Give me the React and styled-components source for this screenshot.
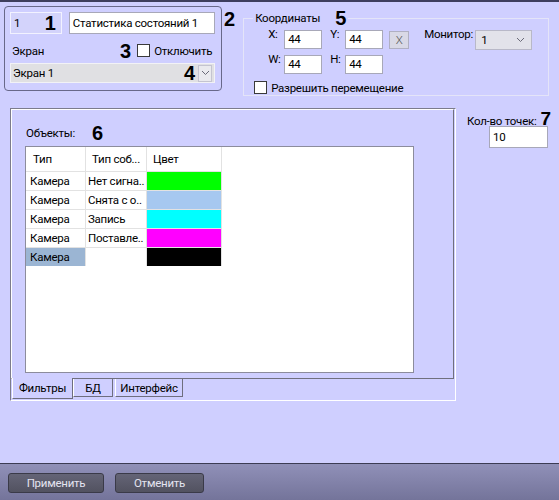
import React from 'react'
import styled, { createGlobalStyle } from 'styled-components'

const GlobalStyle = createGlobalStyle`
  html, body {
    margin: 0;
    padding: 0;
    background: #cfcfff;
  }
  body {
    font-family: Roboto, "Liberation Sans", sans-serif;
    font-size: 11.5px;
    letter-spacing: -0.25px;
    color: #000;
  }
  * { box-sizing: border-box; }
`

const Screen = styled.div`
  width: 559px;
  height: 500px;
  display: flex;
  flex-direction: column;
  border-top: 2px solid #3e3e5e;
  background: #cfcfff;
  overflow: hidden;
`

const Callout = styled.span`
  font-family: "Liberation Sans", Arial, sans-serif;
  font-weight: bold;
  font-size: ${p => p.size || 20}px;
  line-height: ${p => p.size || 20}px;
  letter-spacing: 0;
  color: #000;
  margin-left: ${p => p.ml || 0}px;
  margin-top: ${p => p.mt || 0}px;
`

const TopRow = styled.div`
  display: flex;
  align-items: flex-start;
  height: 106px;
  padding: 4px 0 0 4px;
`

const LeftPanel = styled.div`
  width: 218px;
  height: 85px;
  border: 1px solid #68688a;
  border-radius: 4px;
  padding: 5px 6px 0 5px;
  display: flex;
  flex-direction: column;
`

const PanelRow = styled.div`
  display: flex;
  align-items: center;
  height: ${p => p.h}px;
  margin-top: ${p => p.mt || 0}px;
  padding-left: ${p => p.pl || 0}px;
`

const IdField = styled.div`
  width: 52px;
  height: 22px;
  background: #d3d3fb;
  border: 1px solid #f2f2ff;
  display: flex;
  align-items: center;
  justify-content: space-between;
  padding: 0 5px 0 3px;
`

const TextBox = styled.div`
  width: ${p => p.w}px;
  height: ${p => p.h || 22}px;
  margin-left: ${p => p.ml || 0}px;
  margin-top: ${p => p.mt || 0}px;
  background: #fff;
  border: 1px solid #a8a8b8;
  padding: 0 3px ${p => (p.bottom ? 2 : 0)}px;
  display: flex;
  align-items: ${p => (p.bottom ? 'flex-end' : 'center')};
  white-space: nowrap;
`

const FieldLabel = styled.span`
  width: ${p => p.w}px;
  flex: none;
  white-space: nowrap;
`

const CheckBox = styled.span`
  width: 13px;
  height: 13px;
  flex: none;
  background: #fff;
  border: 1px solid #3a3a3a;
  margin-left: ${p => p.ml || 0}px;
`

const CheckText = styled.span`
  margin-left: 4px;
  white-space: nowrap;
`

const Combo = styled.div`
  width: ${p => p.w}px;
  height: 20px;
  background: #e0e0e3;
  border: 1px solid #f2f2f6;
  display: flex;
  align-items: center;
  padding: 0 2px 0 2px;
`

const ComboText = styled.span`
  flex: 1;
  white-space: nowrap;
`

const DropButton = styled.span`
  width: 14px;
  height: 17px;
  flex: none;
  background: #eaeaee;
  border: 1px solid #c4c4d0;
  display: flex;
  align-items: center;
  justify-content: center;
  margin-left: 3px;
`

const Select = styled.div`
  width: 57px;
  height: 20px;
  background: #e2e2ea;
  border: 1px solid #b8b8c8;
  display: flex;
  align-items: flex-end;
  justify-content: space-between;
  padding: 0 6px 2px 5px;
  margin-left: ${p => p.ml || 0}px;
  svg { margin-bottom: 4px; }
`

const Coords = styled.fieldset`
  width: 306px;
  margin: 2px 0 0 8px;
  padding: 0 0 1px 0;
  border: 1px solid #e4e4f8;
  min-width: 0;
`

const Legend = styled.legend`
  display: flex;
  align-items: center;
  height: 20px;
  margin-left: 9px;
  padding: 0 2px;
`

const CoordRow = styled.div`
  display: flex;
  align-items: flex-start;
  height: ${p => p.h || 19}px;
  margin-top: ${p => p.mt}px;
  padding-left: ${p => p.pl || 24}px;
`

const AxisLabel = styled.span`
  width: ${p => p.w}px;
  flex: none;
  margin-left: ${p => p.ml || 0}px;
  margin-top: -3px;
  line-height: 14px;
  white-space: nowrap;
`

const ClearButton = styled.span`
  width: 20px;
  height: 18px;
  margin: 1px 0 0 6px;
  flex: none;
  background: #d9d9e6;
  border: 1px solid #b0b0c2;
  color: #555;
  display: flex;
  align-items: center;
  justify-content: center;
  font-weight: 300;
`

const MiddleRow = styled.div`
  display: flex;
  align-items: flex-start;
  padding-left: 10px;
`

const TabControl = styled.div`
  width: 446px;
  height: 293px;
  border-top: 1px solid #7c7c8c;
  border-left: 1px solid #7c7c8c;
  border-right: 1px solid #fff;
  border-bottom: 1px solid #fff;
  display: flex;
  flex-direction: column;
`

const Page = styled.div`
  width: 443px;
  height: 270px;
  flex: none;
  border-top: 1px solid #fff;
  border-left: 1px solid #fff;
  border-right: 1px solid #70707e;
  border-bottom: 1px solid #70707e;
  padding: 13px 0 0 13px;
`

const ObjectsHeader = styled.div`
  display: flex;
  align-items: center;
  height: 20px;
  padding-left: 1px;
`

const ListBox = styled.div`
  width: 389px;
  height: 227px;
  margin-top: 3px;
  background: #fff;
  border: 1px solid #8c8c9c;
`

const Grid = styled.div`
  display: grid;
  grid-template-columns: 59px 60px 74px;
  grid-template-rows: 24px;
  grid-auto-rows: 18px;
  gap: 1px;
  width: max-content;
  padding-right: 1px;
  background: #e2e2e2;
`

const HeadCell = styled.div`
  background: #fff;
  display: flex;
  align-items: center;
  padding-left: ${p => p.pl || 6}px;
  white-space: nowrap;
`

const Cell = styled.div`
  background: ${p => p.bg || '#fff'};
  display: flex;
  align-items: center;
  padding-left: ${p => p.pl || 4}px;
  white-space: nowrap;
  overflow: hidden;
`

const Tabs = styled.div`
  display: flex;
  align-items: flex-start;
  height: 21px;
  padding-left: 1px;
`

const Tab = styled.div`
  width: ${p => p.w}px;
  height: ${p => (p.active ? 21 : 18)}px;
  margin-top: ${p => (p.active ? -1 : 0)}px;
  margin-left: ${p => p.ml || 0}px;
  background: #cfcfff;
  border-left: 1px solid #fff;
  border-right: 1px solid #6e6e7e;
  border-bottom: 1px solid #6e6e7e;
  display: flex;
  align-items: center;
  justify-content: center;
  white-space: nowrap;
`

const Side = styled.div`
  margin-left: 11px;
  display: flex;
  flex-direction: column;
`

const SideLabel = styled.div`
  display: flex;
  align-items: baseline;
  height: 17px;
  padding-top: 1px;
  white-space: nowrap;
`

const BottomBar = styled.div`
  margin-top: auto;
  height: 37px;
  border-top: 1px solid #3c3c54;
  background: linear-gradient(#9090b8, #74749a);
  padding: 9px 0 0 8px;
  display: flex;
  gap: 11px;
  align-items: flex-start;
`

const Button = styled.div`
  width: ${p => p.w}px;
  height: 20px;
  background: linear-gradient(#646476, #525260);
  border: 1px solid #3a3a48;
  border-radius: 3px;
  color: #e4e4f0;
  display: flex;
  align-items: center;
  justify-content: center;
`

const Chevron = () => (
  <svg width="9" height="6" viewBox="0 0 9 6">
    <polyline points="1,1 4.5,4.5 8,1" fill="none" stroke="#6a6a78" strokeWidth="1" />
  </svg>
)

const rows = [
  { type: 'Камера', event: 'Нет сигна..', color: '#00ff00' },
  { type: 'Камера', event: 'Снята с о..', color: '#a6c8f0' },
  { type: 'Камера', event: 'Запись', color: '#00ffff' },
  { type: 'Камера', event: 'Поставле..', color: '#ff00ff' },
  { type: 'Камера', event: '', color: '#000000', selected: true },
]

export default function App() {
  return (
    <Screen>
      <GlobalStyle />
      <TopRow>
        <LeftPanel>
          <PanelRow h={22}>
            <IdField>
              <span>1</span>
              <Callout>1</Callout>
            </IdField>
            <TextBox w={147} ml={7}>Статистика состояний 1</TextBox>
          </PanelRow>
          <PanelRow h={15} mt={9} pl={2}>
            <FieldLabel w={108}>Экран</FieldLabel>
            <Callout>3</Callout>
            <CheckBox ml={6} />
            <CheckText>Отключить</CheckText>
          </PanelRow>
          <PanelRow h={20} mt={5}>
            <Combo w={207}>
              <ComboText>Экран 1</ComboText>
              <Callout>4</Callout>
              <DropButton><Chevron /></DropButton>
            </Combo>
          </PanelRow>
        </LeftPanel>
        <Callout ml={2} mt={3}>2</Callout>
        <Coords>
          <Legend>
            <span>Координаты</span>
            <Callout ml={15}>5</Callout>
          </Legend>
          <CoordRow mt={2}>
            <AxisLabel w={16}>X:</AxisLabel>
            <TextBox w={38} h={19} bottom>44</TextBox>
            <AxisLabel w={15} ml={8}>Y:</AxisLabel>
            <TextBox w={38} h={19} bottom>44</TextBox>
            <ClearButton>X</ClearButton>
            <AxisLabel w={51} ml={15}>Монитор:</AxisLabel>
            <Select>
              <span>1</span>
              <Chevron />
            </Select>
          </CoordRow>
          <CoordRow mt={6}>
            <AxisLabel w={16}>W:</AxisLabel>
            <TextBox w={38} h={19} bottom>44</TextBox>
            <AxisLabel w={15} ml={8}>H:</AxisLabel>
            <TextBox w={38} h={19} bottom>44</TextBox>
          </CoordRow>
          <CoordRow mt={7} h={13} pl={10}>
            <CheckBox />
            <CheckText>Разрешить перемещение</CheckText>
          </CoordRow>
        </Coords>
      </TopRow>

      <MiddleRow>
        <TabControl>
          <Page>
            <ObjectsHeader>
              <span>Объекты:</span>
              <Callout ml={17}>6</Callout>
            </ObjectsHeader>
            <ListBox>
              <Grid>
                <HeadCell pl={7}>Тип</HeadCell>
                <HeadCell pl={6}>Тип соб...</HeadCell>
                <HeadCell pl={6}>Цвет</HeadCell>
                {rows.map((r, i) => (
                  <React.Fragment key={i}>
                    <Cell bg={r.selected ? '#9bb5d3' : '#fff'}>{r.type}</Cell>
                    <Cell pl={2}>{r.event}</Cell>
                    <Cell bg={r.color} />
                  </React.Fragment>
                ))}
              </Grid>
            </ListBox>
          </Page>
          <Tabs>
            <Tab w={61} active>Фильтры</Tab>
            <Tab w={40}>БД</Tab>
            <Tab w={68} ml={2}>Интерфейс</Tab>
          </Tabs>
        </TabControl>
        <Side>
          <SideLabel>
            <span>Кол-во точек:</span>
            <Callout ml={4} size={19}>7</Callout>
          </SideLabel>
          <TextBox w={59} h={22} ml={22} mt={1}>10</TextBox>
        </Side>
      </MiddleRow>

      <BottomBar>
        <Button w={96}>Применить</Button>
        <Button w={89}>Отменить</Button>
      </BottomBar>
    </Screen>
  )
}
